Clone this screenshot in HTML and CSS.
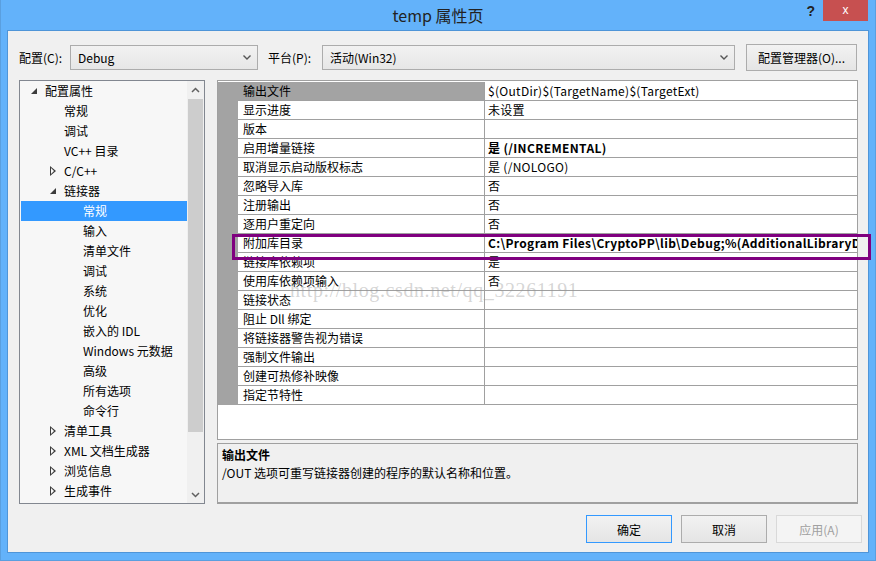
FILE: index.html
```html
<!DOCTYPE html>
<html lang="zh-CN">
<head>
    <meta charset="UTF-8">
    <title>temp 属性页</title>
    <link rel="stylesheet" href="styles.css">
</head>
<body>
<div class="window">
    <div class="titlebar">
        <span class="title">temp 属性页</span>
        <span class="help">?</span>
        <span class="close">x</span>
    </div>

    <div class="client">
        <div class="toolbar">
            <span class="lbl lbl-config">配置(C):</span>
            <div class="combo combo-config">
                <span>Debug</span>
                <svg width="8" height="5" viewBox="0 0 8 5"><path d="M0.5 0.5 L4 4 L7.5 0.5" fill="none" stroke="#555" stroke-width="1.4"/></svg>
            </div>
            <span class="lbl lbl-platform">平台(P):</span>
            <div class="combo combo-platform">
                <span>活动(Win32)</span>
                <svg width="8" height="5" viewBox="0 0 8 5"><path d="M0.5 0.5 L4 4 L7.5 0.5" fill="none" stroke="#555" stroke-width="1.4"/></svg>
            </div>
            <button class="btn btn-manager">配置管理器(O)...</button>
        </div>

        <div class="main">
            <div class="tree">
                <ul class="tree-list">
                    <li class="lvl0"><i class="arrow open"></i>配置属性</li>
                    <li class="lvl1"><i class="arrow"></i>常规</li>
                    <li class="lvl1"><i class="arrow"></i>调试</li>
                    <li class="lvl1"><i class="arrow"></i>VC++ 目录</li>
                    <li class="lvl1"><i class="arrow closed"></i>C/C++</li>
                    <li class="lvl1"><i class="arrow open"></i>链接器</li>
                    <li class="lvl2 selected"><i class="arrow"></i>常规</li>
                    <li class="lvl2"><i class="arrow"></i>输入</li>
                    <li class="lvl2"><i class="arrow"></i>清单文件</li>
                    <li class="lvl2"><i class="arrow"></i>调试</li>
                    <li class="lvl2"><i class="arrow"></i>系统</li>
                    <li class="lvl2"><i class="arrow"></i>优化</li>
                    <li class="lvl2"><i class="arrow"></i>嵌入的 IDL</li>
                    <li class="lvl2"><i class="arrow"></i>Windows 元数据</li>
                    <li class="lvl2"><i class="arrow"></i>高级</li>
                    <li class="lvl2"><i class="arrow"></i>所有选项</li>
                    <li class="lvl2"><i class="arrow"></i>命令行</li>
                    <li class="lvl1"><i class="arrow closed"></i>清单工具</li>
                    <li class="lvl1"><i class="arrow closed"></i>XML 文档生成器</li>
                    <li class="lvl1"><i class="arrow closed"></i>浏览信息</li>
                    <li class="lvl1"><i class="arrow closed"></i>生成事件</li>
                </ul>
                <div class="vscroll">
                    <div class="sb-btn">
                        <svg width="9" height="6" viewBox="0 0 9 6"><path d="M1 5 L4.5 1.5 L8 5" fill="none" stroke="#606060" stroke-width="1.5"/></svg>
                    </div>
                    <div class="sb-track"><div class="sb-thumb"></div></div>
                    <div class="sb-btn">
                        <svg width="9" height="6" viewBox="0 0 9 6"><path d="M1 1 L4.5 4.5 L8 1" fill="none" stroke="#606060" stroke-width="1.5"/></svg>
                    </div>
                </div>
            </div>

            <div class="right">
                <div class="grid">
                    <div class="row current"><span class="g"></span><span class="name">输出文件</span><span class="val">$(OutDir)$(TargetName)$(TargetExt)</span></div>
                    <div class="row"><span class="g"></span><span class="name">显示进度</span><span class="val">未设置</span></div>
                    <div class="row"><span class="g"></span><span class="name">版本</span><span class="val"></span></div>
                    <div class="row"><span class="g"></span><span class="name">启用增量链接</span><span class="val bold">是 (/INCREMENTAL)</span></div>
                    <div class="row"><span class="g"></span><span class="name">取消显示启动版权标志</span><span class="val">是 (/NOLOGO)</span></div>
                    <div class="row"><span class="g"></span><span class="name">忽略导入库</span><span class="val">否</span></div>
                    <div class="row"><span class="g"></span><span class="name">注册输出</span><span class="val">否</span></div>
                    <div class="row"><span class="g"></span><span class="name">逐用户重定向</span><span class="val">否</span></div>
                    <div class="row"><span class="g"></span><span class="name">附加库目录</span><span class="val bold">C:\Program Files\CryptoPP\lib\Debug;%(AdditionalLibraryDirectories)</span></div>
                    <div class="row"><span class="g"></span><span class="name">链接库依赖项</span><span class="val">是</span></div>
                    <div class="row"><span class="g"></span><span class="name">使用库依赖项输入</span><span class="val">否</span></div>
                    <div class="row"><span class="g"></span><span class="name">链接状态</span><span class="val"></span></div>
                    <div class="row"><span class="g"></span><span class="name">阻止 Dll 绑定</span><span class="val"></span></div>
                    <div class="row"><span class="g"></span><span class="name">将链接器警告视为错误</span><span class="val"></span></div>
                    <div class="row"><span class="g"></span><span class="name">强制文件输出</span><span class="val"></span></div>
                    <div class="row"><span class="g"></span><span class="name">创建可热修补映像</span><span class="val"></span></div>
                    <div class="row"><span class="g"></span><span class="name">指定节特性</span><span class="val"></span></div>
                </div>
                <div class="desc">
                    <div class="desc-title">输出文件</div>
                    <div class="desc-text">/OUT 选项可重写链接器创建的程序的默认名称和位置。</div>
                </div>
            </div>
        </div>

        <div class="buttons">
            <button class="btn btn-ok">确定</button>
            <button class="btn">取消</button>
            <button class="btn btn-disabled">应用(A)</button>
        </div>
    </div>

    <!-- pen marking and blog watermark lying over the dialog -->
    <div class="highlight"></div>
    <div class="watermark">http://blog.csdn.net/qq_32261191</div>
</div>
</body>
</html>
```

FILE: styles.css
```css
* {
    box-sizing: border-box;
    margin: 0;
    padding: 0;
}
body {
    font-family: "Noto Sans CJK SC", "Noto Sans", sans-serif;
    font-size: 12px;
    color: #000;
    background: #63b2fa;
}
.window {
    position: relative;
    width: 876px;
    height: 561px;
    background: #63b2fa;
    border: 1px solid #5a9fdf;
    border-top: none;
    display: flex;
    flex-direction: column;
}

/* title bar */
.titlebar {
    position: relative;
    height: 30px;
    display: flex;
    align-items: center;
    justify-content: center;
}
.title {
    font-size: 16px;
    color: #222;
    line-height: 30px;
}
.help {
    position: absolute;
    right: 60px;
    top: 3px;
    font-size: 14px;
    font-weight: bold;
    color: #222;
    font-family: "Liberation Sans", sans-serif;
}
.close {
    position: absolute;
    right: 7px;
    top: 0;
    width: 45px;
    height: 21px;
    background: #c75050;
    color: #fff;
    font-family: "Liberation Sans", sans-serif;
    font-size: 12px;
    line-height: 20px;
    text-align: center;
}

/* client area */
.client {
    flex: 1;
    margin: 0 6px 7px 6px;
    background: #f0f0f0;
    border: 1px solid #4f95d8;
    display: flex;
    flex-direction: column;
}
.toolbar {
    display: flex;
    align-items: center;
    height: 27px;
    margin-top: 13px;
    padding-left: 11px;
}
.lbl {
    line-height: 16px;
}
.lbl-config {
    width: 51px;
}
.lbl-platform {
    width: 54px;
    margin-left: 10px;
}
.combo {
    height: 25px;
    border: 1px solid #acacac;
    background: linear-gradient(#f2f2f2, #e6e6e6);
    display: flex;
    align-items: center;
    justify-content: space-between;
    padding: 0 6px 0 7px;
    line-height: 16px;
}
.combo-config {
    width: 188px;
}
.combo-platform {
    width: 413px;
}
.btn {
    font-family: inherit;
    font-size: 12px;
    color: #000;
    border: 1px solid #acacac;
    background: linear-gradient(#f2f2f2, #e5e5e5);
    width: 86px;
    height: 28px;
}
.btn-manager {
    width: 111px;
    height: 27px;
    margin-left: 11px;
}

.main {
    display: flex;
    gap: 12px;
    height: 424px;
    margin-top: 9px;
    padding-left: 11px;
}

/* tree */
.tree {
    width: 186px;
    border: 1px solid #828790;
    background: #f7f7f7;
    display: flex;
}
.tree-list {
    flex: 1;
    list-style: none;
    padding-left: 1px;
}
.tree-list li {
    height: 20px;
    line-height: 20px;
    display: flex;
    align-items: center;
    white-space: nowrap;
}
.tree-list .lvl0 { padding-left: 6px; }
.tree-list .lvl1 { padding-left: 25px; }
.tree-list .lvl2 { padding-left: 44px; }
.tree-list li.selected {
    background: #3399ff;
    color: #fff;
}
.arrow {
    width: 18px;
    height: 20px;
    flex: none;
    position: relative;
}
.arrow.open::before {
    content: "";
    position: absolute;
    left: 4px;
    top: 7px;
    border-style: solid;
    border-width: 0 0 6px 6px;
    border-color: transparent transparent #3c3c3c transparent;
}
.arrow.closed::before {
    content: "";
    position: absolute;
    left: 4px;
    top: 5px;
    width: 0;
    height: 0;
    border-style: solid;
    border-width: 5px 0 5px 6px;
    border-color: transparent transparent transparent #3c3c3c;
}
.arrow.closed::after {
    content: "";
    position: absolute;
    left: 5px;
    top: 7px;
    border-style: solid;
    border-width: 3px 0 3px 3.5px;
    border-color: transparent transparent transparent #f7f7f7;
}
.vscroll {
    width: 17px;
    display: flex;
    flex-direction: column;
    background: #f0f0f0;
}
.sb-btn {
    height: 17px;
    display: flex;
    align-items: center;
    justify-content: center;
}
.sb-track {
    flex: 1;
    padding: 1px 0 0 0;
}
.sb-thumb {
    height: 333px;
    margin: 0 1px;
    background: #cdcdcd;
}

/* property grid */
.right {
    width: 641px;
    display: flex;
    flex-direction: column;
    gap: 3px;
}
.grid {
    height: 360px;
    border: 1px solid #a0a0a0;
    background: #fff;
    padding-top: 1px;
}
.row {
    display: flex;
    height: 19px;
    line-height: 18px;
}
.row .g {
    width: 20px;
    flex: none;
    background: #a3a3a3;
}
.row .name {
    width: 247px;
    flex: none;
    padding-left: 5px;
    border-right: 1px solid #a0a0a0;
    border-bottom: 1px solid #a0a0a0;
    white-space: nowrap;
}
.row.current .name {
    background: #a3a3a3;
}
.row .val {
    flex: 1;
    padding-left: 3px;
    border-bottom: 1px solid #a0a0a0;
    white-space: nowrap;
    overflow: hidden;
    letter-spacing: 0.3px;
}
.val.bold {
    font-weight: bold;
    letter-spacing: 0.35px;
}

.desc {
    height: 61px;
    border: 1px solid #a0a0a0;
    border-bottom-width: 2px;
    background: #f0f0f0;
    padding: 2px 4px;
    line-height: 18px;
}
.desc-title {
    font-weight: bold;
}

/* dialog buttons */
.buttons {
    display: flex;
    justify-content: flex-end;
    gap: 9px;
    margin-top: 11px;
    padding-right: 6px;
}
.btn-ok {
    border-color: #3399ff;
}
.btn-disabled {
    border-color: #d9d9d9;
    background: #f4f4f4;
    color: #a0a0a0;
}

/* overlays */
.highlight {
    position: absolute;
    left: 231px;
    top: 234px;
    width: 639px;
    height: 26px;
    border: 3px solid #7f007f;
}
.watermark {
    position: absolute;
    left: 289px;
    top: 279px;
    font-family: "Liberation Serif", serif;
    font-size: 20px;
    letter-spacing: 0.6px;
    color: rgba(150, 150, 150, 0.4);
    white-space: nowrap;
}
```
